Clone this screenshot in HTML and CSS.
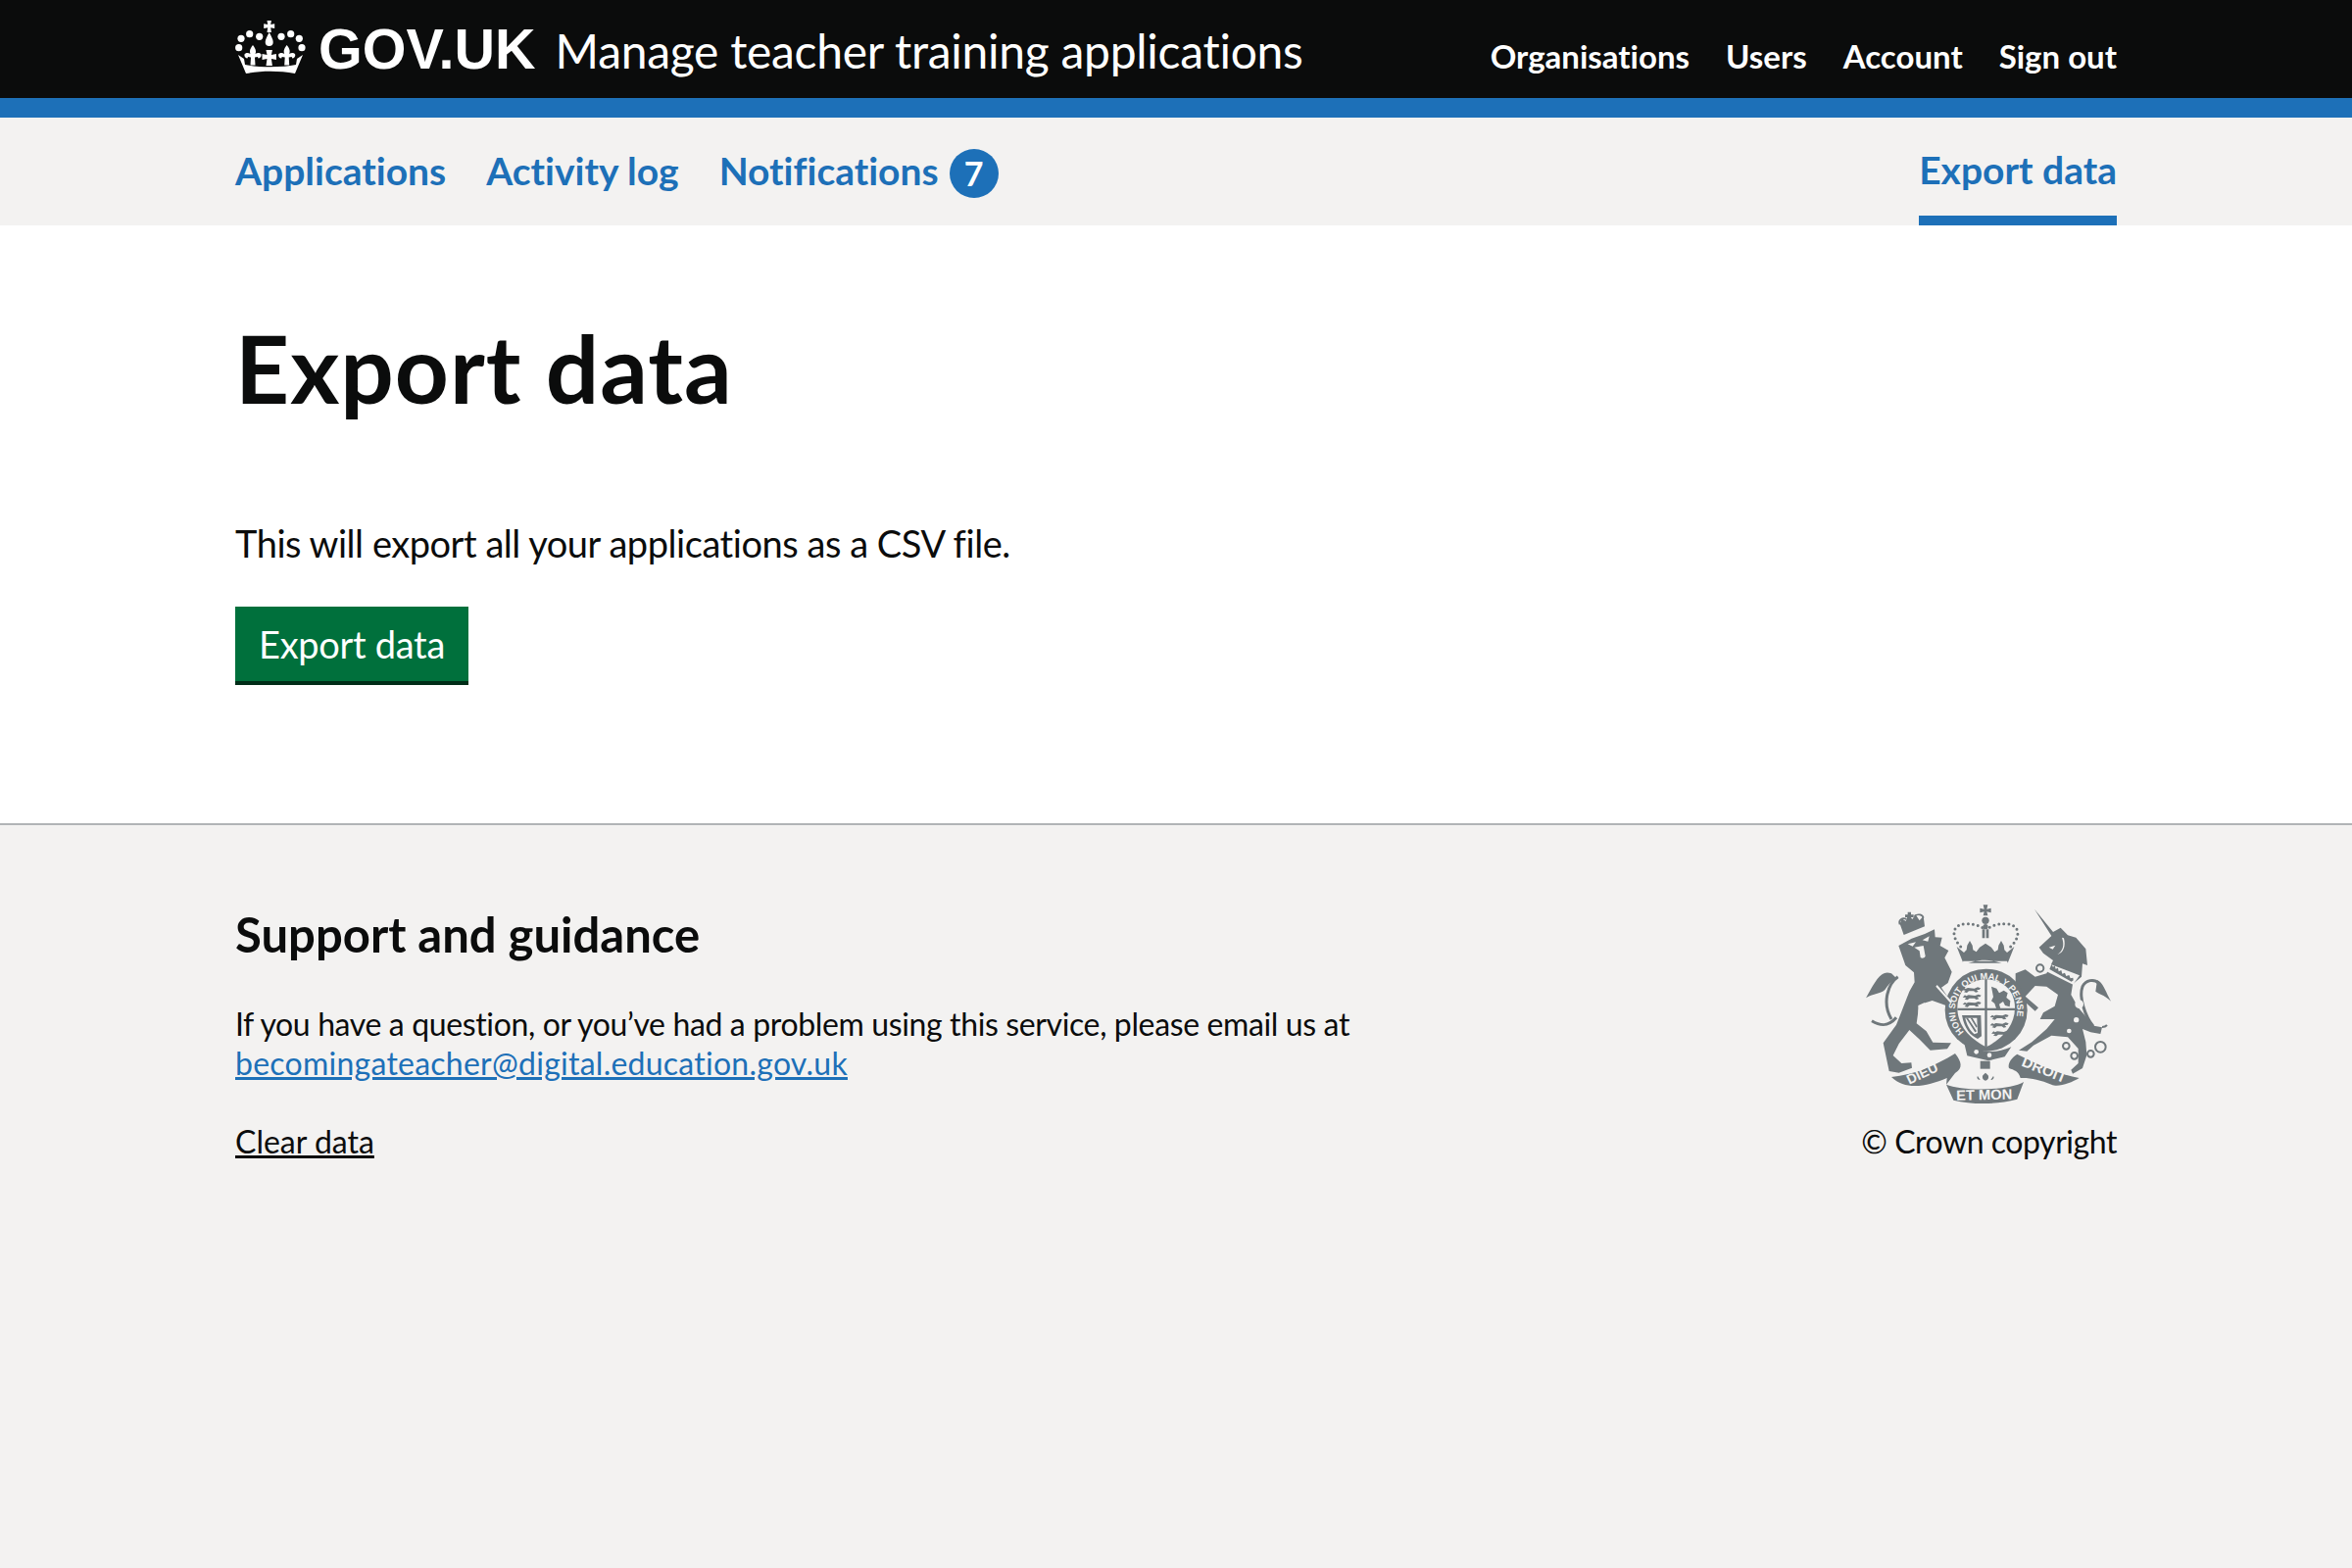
FILE: index.html
```html
<!DOCTYPE html>
<html lang="en">

<head>
    <meta name="viewport" content="width=device-width, initial-scale=1">
    <meta charset="utf-8">
    <title>Export data - Manage teacher training applications</title>
    <link rel="stylesheet" href="styles.css">
</head>

<body>

    <header class="header">
        <div class="container header-inner">
            <a class="logo" href="#">
                <svg class="crown" viewBox="0 0 72 56" aria-hidden="true">
                    <defs>
                        <path id="fleur" d="M0 0c2 3 4 5 2.500 9 2-1.500 5-1.500 6 .5 .5 2-1 4-3 4l-.5-1.500-3 .5 .5 8h-5l.5-8-3-.5-.5 1.500c-2 0-3.500-2-3-4 1-2 4-2 6-.5-1.500-4 .5-6 2.500-9z"/>
                    </defs>
                    <g fill="#fff">
                        <circle cx="6" cy="19.300" r="3.600"/><circle cx="14.700" cy="14.700" r="3.600"/><circle cx="24.700" cy="17.300" r="3.600"/>
                        <circle cx="47" cy="17.300" r="3.600"/><circle cx="56.700" cy="14.700" r="3.600"/><circle cx="65.300" cy="19.300" r="3.600"/>
                        <circle cx="3.700" cy="28.700" r="3.600"/><circle cx="68" cy="28.700" r="3.600"/>
                        <path d="M32.500 1h4.400l-.7 4 4-.7v4.600l-4-.7.7 4.800h-4.400l.7-4.800-4 .7V4.300l4 .7z"/>
                        <path d="M34.700 13c-2 4-4 7-4 10a4 4 0 0 0 8 0c0-3-2-6-4-10z"/>
                        <use href="#fleur" x="18" y="26"/>
                        <use href="#fleur" x="52.700" y="26"/>
                        <path d="M31.500 31h6.400l-1 5 5-1v6l-5-1 1 7h-6.400l1-7-5 1v-6l5 1z"/>
                        <path d="M3 36l6 4 1 6c14 3 38 3 52 0l1-6 6-4-8 19c-16-3-34-3-50 0z"/>
                    </g>
                </svg>
                <span class="logo-text">GOV.UK</span>
            </a>
            <a class="service-name" href="#">Manage teacher training applications</a>
            <nav class="account-nav">
                <a href="#">Organisations</a>
                <a href="#">Users</a>
                <a href="#">Account</a>
                <a href="#">Sign out</a>
            </nav>
        </div>
    </header>

    <nav class="primary-nav">
        <div class="container primary-nav-inner">
            <a href="#">Applications</a>
            <a href="#">Activity log</a>
            <a href="#">Notifications <span class="badge">7</span></a>
            <a class="current" href="#">Export data</a>
        </div>
    </nav>

    <main class="container main">
        <h1>Export data</h1>
        <p>This will export all your applications as a CSV file.</p>
        <a class="button" href="#">Export data</a>
    </main>

    <footer class="footer">
        <div class="container footer-inner">
            <div class="footer-info">
                <h2>Support and guidance</h2>
                <p>If you have a question, or you’ve had a problem using this service, please email us at<br>
                    <a class="mail" href="#">becomingateacher@digital.education.gov.uk</a></p>
                <a class="plain" href="#">Clear data</a>
            </div>
            <div class="footer-crest">
                <svg class="crest" viewBox="0 0 900 690" aria-hidden="true">
                    <defs>
                        <path id="ring-path" d="M372 459A95 95 0 1 1 508 459"/>
                        <path id="small-lion" d="M0 9l7-7 4 3 7-3 20 2 10-4 9 3-4 5-8 0 5 6-8 2-6-4-15 0-6 5-9-2 5-5z"/>
                    </defs>
                    <g fill="#6f777b">
                        <!-- lion -->
                        <path d="M172 195l40-22 40-14 30-14 2 24 21 1-6 25 26 15-12 22 22 43-12 34-20 14 28 42 22 30 6 18-20-2-24-34-40-14-26 8-16 20-6 42 30 24 20 34 56 2-12 18-52 4-34-34-30-28-32 42-18 36 26 24 30-2 2 16-40 15-30-5-18-86 40-56 16-40 24-62 16-28-2-30-26-22z"/>
                        <!-- lion crown -->
                        <path d="M176 128l12 34 64-26-4-32-12 14-12-18-10 14-12-16-8 22-12-8z"/>
                        <path d="M200 92h10v8h8v8h-8v10h-10v-10h-8v-8h8z"/>
                        <!-- lion tail -->
                        <path d="M150 280c-30-12-45 15-78 75 22-14 43-12 58-25 10-14 20-28 35-36z"/>
                        <!-- unicorn -->
                        <path d="M588 83L645 153l23-13 22 23 25 7 30 35 5 50-15-5-3 40-27 23-5 32 22 40 13 15 35 40 25 5-5 20-30-5-25-10 10 40 3 40-13 40-30 17-5-12 22-20v-45l-32-35-50-5-55 30-20 18-25-3 40-25 45-40 25-30-45 0 10-20 35-20 10-35-35-25-35-2-30 32 40 35-10 10-45-40-15-35 45 5-45-5v-40l30-12 30 22 35-10 20-40-30-22-13-18 38-35z"/>
                        <!-- unicorn tail -->
                        <path d="M780 300c20 10 25 35 42 65-22-20-32-20-47-30z"/>
                        <!-- ribbons -->
                        <path d="M150 597c70-7 135-35 195-72 20 25 25 45 0 60l-27 35 2-20c-60 25-125 40-170-3z"/>
                        <path d="M318 620c47 20 192 20 237-8l-20 53c-65 17-135 17-195 3z"/>
                        <path d="M535 527c65 33 135 63 190 73-25 15-65 30-85 20-35-15-70-22-95-20-5-20-20-25-35-30-5-15 10-35 25-43z"/>
                        <!-- royal crown -->
                        <path d="M431 70h14l-3 13 13-3v14l-13-3 3 12h-14l3-12-13 3V80l13 3z"/>
                        <circle cx="438" cy="118" r="11"/>
                        <circle cx="438" cy="137" r="8"/>
                        <path d="M428 145h8v27h-8zM440 145h8v27h-8z"/>
                        <path d="M350 198l22 18 8-8 2-14 8-14 8 14 2 14 10 6 10-14 18-12 18 12 10 14 10-6 2-14 8-14 8 14 2 14 8 8 22-18-20 50H370z"/>
                        <!-- garter -->
                        <circle cx="440" cy="392" r="126"/>
                        <path d="M372 490c40 30 90 40 145 15l-20 30-50 12-65-15z"/>
                        <!-- lily stem -->
                        <path d="M422 548h30v24h-30z"/>
                    </g>
                    <g fill="none" stroke="#6f777b">
                        <path stroke-width="9" d="M170 290c-30 20-50 80-20 130"/>
                        <path stroke-width="9" d="M165 415c-25 30-50 25-75 10"/>
                        <path stroke-width="9" d="M768 442c-25-30-45-90-33-122 10-20 35-25 50-10"/>
                        <path stroke-width="9" stroke-linecap="round" stroke-dasharray="0 15" d="M362 198c-27-28-32-68 18-70 25 0 40 7 50 12M515 198c30-28 33-68-17-70-26 0-40 7-50 12"/>
                        <path stroke-width="5" d="M176 130c-6-12 8-24 20-16M220 104c12-8 26-4 28 6"/>
                        <path stroke-width="6" d="M795 444c5 0 10 0 15-6"/>
                        <circle cx="605" cy="264" r="11" stroke-width="6"/>
                        <circle cx="685" cy="502" r="10" stroke-width="6"/>
                        <circle cx="710" cy="532" r="10" stroke-width="6"/>
                        <circle cx="760" cy="526" r="10" stroke-width="6"/>
                        <circle cx="790" cy="505" r="16" stroke-width="6"/>
                    </g>
                    <!-- light details -->
                    <g fill="#f3f2f1">
                        <path d="M352 385c0-45 28-85 88-87 60 2 88 42 88 87 0 55-38 95-88 120-50-25-88-65-88-120z"/>
                        <path d="M362 262c40-30 110-30 150 0l-8-20H370z"/>
                        <path d="M200 190l25-6-10 13zM245 178l21-12-4 16zM220 200l28-5 6 32a10 10 0 0 1-15 4l-3-20z"/>
                        <path d="M232 378l18-8 10 6 12-8 10 10 8-4 14 22-6 24-28-4-24-8-14 2z"/>
                        <path d="M290 315l46 52-4 5-46-52z"/>
                        <path d="M628 248l98 38-20 28-84-42z"/>
                        <path d="M632 200l20-6-8 12zM672 170c8 22 4 40-14 52 20-4 26-28 20-50z"/>
                        <circle cx="410" cy="520" r="7"/>
                        <circle cx="450" cy="530" r="7"/>
                        <circle cx="725" cy="374" r="13"/>
                        <circle cx="716" cy="422" r="8"/>
                        <circle cx="694" cy="456" r="7"/>
                        <circle cx="590" cy="348" r="9"/>
                        <path d="M420 578c6 8 14 8 18 2 4 6 12 6 18-2l18 18c-2 14-20 18-30 8l4 18-10 8-10-8 4-18c-10 10-28 6-30-8z"/>
                    </g>
                    <g fill="#6f777b">
                        <path d="M436 298h7v207h-7zM352 386h176v7H352z"/>
                        <path d="M640 252l5 8 5-4 3 10 7-3 2 11 8-4 3 11 8-3 4 10 9-3 4 10 8-2 1 8-6 4-67-38z"/>
                        <path d="M430 592c-4 8 2 16 8 16s12-8 8-16l-8-8zM414 594c-4 6 0 12 8 12zM462 594c4 6 0 12-8 12z"/>
                        <use href="#small-lion" x="366" y="322"/>
                        <use href="#small-lion" x="368" y="344"/>
                        <use href="#small-lion" x="368" y="366"/>
                        <use href="#small-lion" x="452" y="405"/>
                        <use href="#small-lion" x="452" y="430"/>
                        <use href="#small-lion" x="456" y="455"/>
                        <path d="M456 320l16 6 8 14 14-8 12 8-4 14 12 10-2 18-14-4-6-12-12 8 4 14-12 2-6-18-10-8 6-12z"/>
                        <path d="M366 408h58l2 64-12 8c-22-10-40-30-48-72zm10 8c4 20 14 38 28 50l10-4-2-46z"/>
                        <path d="M378 416l28 44 5-3-27-41zM392 416l18 30 3-4-15-26z"/>
                    </g>
                    <g class="crest-text">
                        <text font-size="27.500"><textPath href="#ring-path">HONI SOIT QUI MAL Y PENSE</textPath></text>
                        <text font-size="42" x="205" y="620" transform="rotate(-25 205 620)">DIEU</text>
                        <text font-size="44" x="349" y="668" transform="rotate(-1 349 668)">ET MON</text>
                        <text font-size="46" x="546" y="562" transform="rotate(22 546 562)">DROIT</text>
                    </g>
                </svg>
                <span class="copyright">© Crown copyright</span>
            </div>
        </div>
    </footer>

</body>

</html>
```

FILE: styles.css
```css
* {
    box-sizing: border-box;
}

html,
body {
    height: 100%;
}

body {
    margin: 0;
    display: flex;
    flex-direction: column;
    font-family: Lato, "Noto Sans", Arial, sans-serif;
    font-variant-ligatures: none;
    color: #0b0c0c;
    background: #fff;
}

a {
    color: inherit;
}

.container {
    width: 1920px;
    margin: 0 auto;
}

/* black bar */
.header {
    height: 120px;
    background: #0b0c0c;
    border-bottom: 20px solid #1d70b8;
    color: #fff;
}

.header a {
    color: #fff;
    text-decoration: none;
}

.header-inner {
    display: flex;
    align-items: baseline;
    height: 100px;
    padding-top: 20px;
}

.logo {
    display: flex;
    align-items: baseline;
    margin-right: 20px;
}

.crown {
    width: 72px;
    height: 56px;
    margin-right: 13px;
    align-self: flex-start;
}

.logo-text {
    font-family: "Liberation Sans", Arial, sans-serif;
    font-size: 57.500px;
    line-height: 60px;
    font-weight: 700;
}

.service-name {
    font-size: 48px;
    letter-spacing: -0.28px;
}

.account-nav {
    display: flex;
    gap: 37px;
    margin-left: auto;
    font-size: 33px;
    font-weight: 700;
}

/* grey nav */
.primary-nav {
    height: 110px;
    background: #f3f2f1;
}

.primary-nav-inner {
    display: flex;
    gap: 41px;
    height: 110px;
}

.primary-nav-inner a {
    display: flex;
    align-items: center;
    gap: 11px;
    height: 110px;
    padding-bottom: 3px;
    font-size: 39px;
    font-weight: 700;
    color: #1d70b8;
    text-decoration: none;
}

.primary-nav-inner a.current {
    margin-left: auto;
    border-bottom: 10px solid #1d70b8;
    padding-top: 6px;
    padding-bottom: 0;
}

.badge {
    display: flex;
    align-items: center;
    justify-content: center;
    width: 50px;
    height: 50px;
    margin-top: 6px;
    border-radius: 50%;
    background: #1d70b8;
    color: #fff;
    font-size: 34px;
}

.main {
    height: 610px;
    padding-top: 95px;
}

h1 {
    margin: 0 0 104px;
    font-size: 96px;
    line-height: 100px;
    font-weight: 700;
    letter-spacing: 1px;
}

.main p {
    margin: 0 0 40px;
    font-size: 38px;
    line-height: 50px;
    letter-spacing: -0.46px;
}

.button {
    display: inline-block;
    height: 80px;
    padding: 0 24px;
    background: #00703c;
    border-bottom: 4px solid #002d18;
    color: #fff;
    font-size: 38px;
    line-height: 76px;
    text-decoration: none;
    letter-spacing: -0.3px;
}

.footer {
    flex: 1;
    background: #f3f2f1;
    border-top: 2px solid #b1b4b6;
    font-size: 32px;
    line-height: 40px;
}

.footer-inner {
    display: flex;
    justify-content: space-between;
}

.footer-info {
    padding-top: 84px;
}

h2 {
    margin: 0 0 44px;
    font-size: 49px;
    line-height: 55px;
    font-weight: 700;
}

.footer-info p {
    margin: 0 0 40px;
    letter-spacing: -0.37px;
}

.mail {
    letter-spacing: 0.25px;
    color: #1d70b8;
}

.footer-crest {
    display: flex;
    flex-direction: column;
    align-items: flex-end;
    padding-top: 58px;
}

.crest {
    width: 300px;
    height: 230px;
    margin: 0 -20px 15px 0;
}

.copyright {
    letter-spacing: -0.45px;
}

.crest-text {
    font-family: "Liberation Sans", Arial, sans-serif;
    font-weight: 700;
    fill: #f3f2f1;
}
```
